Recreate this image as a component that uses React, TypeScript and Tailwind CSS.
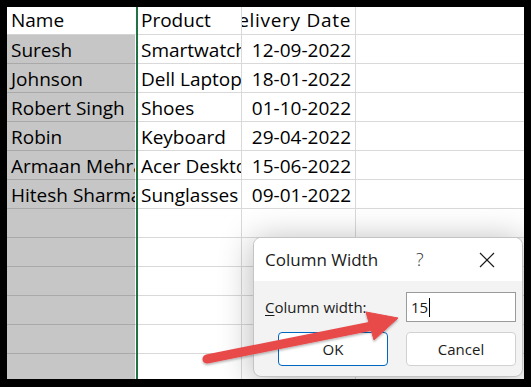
import React from "react";

// --- Data ---

const rows: { name: string; product: string; date: string }[] = [
	{ name: "Suresh", product: "Smartwatch", date: "12-09-2022" },
	{ name: "Johnson", product: "Dell Laptop", date: "18-01-2022" },
	{ name: "Robert Singh", product: "Shoes", date: "01-10-2022" },
	{ name: "Robin", product: "Keyboard", date: "29-04-2022" },
	{ name: "Armaan Mehra", product: "Acer Desktop", date: "15-06-2022" },
	{ name: "Hitesh Sharma", product: "Sunglasses", date: "09-01-2022" },
	{ name: "", product: "", date: "" },
	{ name: "", product: "", date: "" },
	{ name: "", product: "", date: "" },
	{ name: "", product: "", date: "" },
	{ name: "", product: "", date: "" },
	{ name: "", product: "", date: "" },
];

const cellFont = { fontFamily: '"Open Sans", "Noto Sans", sans-serif' };

// --- Sub-Components ---

const SheetRow = ({
	name,
	product,
	date,
	header,
}: {
	name: string;
	product: string;
	date: string;
	header?: boolean;
}) => (
	<div
		className={`flex shrink-0 text-[19px] leading-[24px] text-black ${header ? "h-[28px]" : "h-[29px]"}`}
		style={cellFont}
	>
		<div
			className={`flex w-[129px] shrink-0 items-end overflow-hidden border-r border-white pl-[4px] whitespace-nowrap ${
				header ? "border-b border-b-[#d4d4d4] bg-white pb-[2px]" : "border-b border-b-[#a9a9a9] bg-[#c6c6c6] pb-[1px]"
			}`}
		>
			{name}
		</div>
		<div
			className={`flex w-[106px] shrink-0 items-end overflow-hidden border-r border-b border-[#d9d9d9] pl-[5px] whitespace-nowrap ${
				header ? "pb-[2px]" : "pb-[1px]"
			}`}
		>
			{product}
		</div>
		<div
			className={`flex w-[114px] shrink-0 items-end justify-end overflow-hidden border-r border-b border-[#d9d9d9] pr-[4px] whitespace-nowrap ${
				header ? "pb-[2px] tracking-[0.7px]" : "pb-[1px]"
			}`}
		>
			{date}
		</div>
		<div className="flex-1 border-b border-[#d9d9d9]" />
	</div>
);

const ColumnWidthDialog = () => (
	<div
		className="absolute top-[230px] left-[246px] flex h-[140px] w-[270px] flex-col overflow-hidden rounded-[8px] border border-[#c4c4c4] bg-[#f3f3f3] shadow-[0_4px_34px_rgba(0,0,0,0.3)]"
		style={cellFont}
	>
		{/* Title bar */}
		<div className="flex h-[43px] shrink-0 items-center bg-white pl-[11px] text-[17px] text-[#1b1b1b]">
			<span className="w-[151px]">Column Width</span>
			<span className="text-[18px] font-light text-[#333]">?</span>
			<svg className="ml-[55px] h-[16px] w-[16px]" viewBox="0 0 16 16">
				<path d="M1 1 L15 15 M15 1 L1 15" stroke="#1b1b1b" strokeWidth="1.2" />
			</svg>
		</div>

		{/* Body */}
		<div className="flex flex-col pt-[11px] pr-[6px] pl-[11px] text-[15px] text-[#1b1b1b]">
			<div className="flex items-center justify-between">
				<span>
					<span className="underline underline-offset-2">C</span>olumn width:
				</span>
				<div className="flex h-[30px] w-[110px] items-center border border-[#9a9a9a] bg-white pl-[4px]">
					<span>15</span>
					<span className="ml-[1px] h-[19px] w-[1px] bg-black" />
				</div>
			</div>
			<div className="mt-[10px] flex justify-end gap-[18px]">
				<button className="flex h-[34px] w-[110px] items-center justify-center rounded-[4px] border border-[#0067c0] bg-white">
					OK
				</button>
				<button className="flex h-[34px] w-[110px] items-center justify-center rounded-[4px] border border-[#d1d1d1] bg-white">
					Cancel
				</button>
			</div>
		</div>
	</div>
);

// --- Main ---

export default function App() {
	return (
		<div className="relative h-[387px] w-[531px] overflow-hidden bg-black pt-[7px] pl-[7px]">
			<div className="relative flex h-[372px] w-[517px] flex-col overflow-hidden bg-white">
				<SheetRow header name="Name" product="Product" date="Delivery Date" />
				{rows.map((r, i) => (
					<SheetRow key={i} name={r.name} product={r.product} date={r.date} />
				))}

				{/* Column resize indicator */}
				<div className="absolute top-0 bottom-0 left-[129px] w-[2px] bg-[#217346]" />

				<ColumnWidthDialog />
			</div>

			{/* Annotation arrow */}
			<svg className="pointer-events-none absolute inset-0" width="531" height="387" viewBox="0 0 531 387">
				<defs>
					<filter id="arrowShadow" x="-10%" y="-30%" width="120%" height="160%">
						<feDropShadow dx="0" dy="1.5" stdDeviation="1.2" floodColor="#000" floodOpacity="0.3" />
					</filter>
				</defs>
				<g filter="url(#arrowShadow)" fill="#e84a4a" stroke="#e84a4a">
					<line x1="207" y1="359" x2="372" y2="326" strokeWidth="9" strokeLinecap="round" />
					<polygon points="366,312 398,318 374,340" strokeWidth="1" strokeLinejoin="round" />
				</g>
			</svg>
		</div>
	);
}
